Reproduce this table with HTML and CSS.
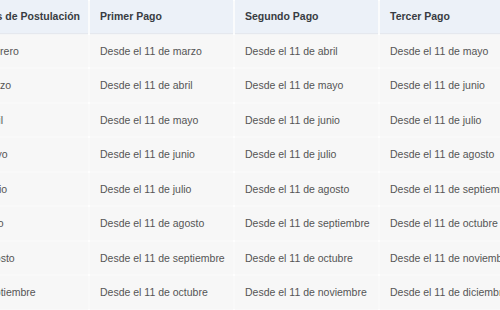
FILE: index.html
```html
<!DOCTYPE html>
<html lang="es">
<head>
<meta charset="utf-8">
<link rel="stylesheet" href="styles.css">
</head>
<body>
<table class="pagos">
  <colgroup>
    <col class="c-mes">
    <col class="c-pago">
    <col class="c-pago">
    <col class="c-pago">
  </colgroup>
  <thead>
    <tr><th>Mes de Postulación</th><th>Primer Pago</th><th>Segundo Pago</th><th>Tercer Pago</th></tr>
  </thead>
  <tbody>
    <tr><td>Febrero</td><td>Desde el 11 de marzo</td><td>Desde el 11 de abril</td><td>Desde el 11 de mayo</td></tr>
    <tr><td>Marzo</td><td>Desde el 11 de abril</td><td>Desde el 11 de mayo</td><td>Desde el 11 de junio</td></tr>
    <tr><td>Abril</td><td>Desde el 11 de mayo</td><td>Desde el 11 de junio</td><td>Desde el 11 de julio</td></tr>
    <tr><td>Mayo</td><td>Desde el 11 de junio</td><td>Desde el 11 de julio</td><td>Desde el 11 de agosto</td></tr>
    <tr><td>Junio</td><td>Desde el 11 de julio</td><td>Desde el 11 de agosto</td><td>Desde el 11 de septiembre</td></tr>
    <tr><td>Julio</td><td>Desde el 11 de agosto</td><td>Desde el 11 de septiembre</td><td>Desde el 11 de octubre</td></tr>
    <tr><td>Agosto</td><td>Desde el 11 de septiembre</td><td>Desde el 11 de octubre</td><td>Desde el 11 de noviembre</td></tr>
    <tr><td>Septiembre</td><td>Desde el 11 de octubre</td><td>Desde el 11 de noviembre</td><td>Desde el 11 de diciembre</td></tr>
  </tbody>
</table>
</body>
</html>
```
FILE: styles.css
```css
html, body {
  margin: 0;
  padding: 0;
  background: #ffffff;
  overflow: hidden;
}
body {
  width: 500px;
  height: 310px;
  font-family: "Liberation Sans", Arial, sans-serif;
}
.pagos {
  table-layout: fixed;
  border-collapse: separate;
  border-spacing: 2px;
  margin: -2px 0 0 -30px;
  width: 555px;
  font-size: 10.5px;
}
.c-mes { width: 116px; }
.c-pago { width: 143px; }
.pagos th,
.pagos td {
  height: 32.5px;
  padding: 0 0 0 10px;
  text-align: left;
  white-space: nowrap;
  overflow: hidden;
  box-sizing: border-box;
}
.pagos th {
  background: #ecf1f8;
  color: #383c42;
  font-weight: bold;
  box-shadow: 0 1px 1px rgba(180, 190, 205, 0.35);
}
.pagos td {
  background: #f7f7f7;
  color: #555555;
  box-shadow: 0 0 1px rgba(200, 200, 200, 0.6);
}
```
